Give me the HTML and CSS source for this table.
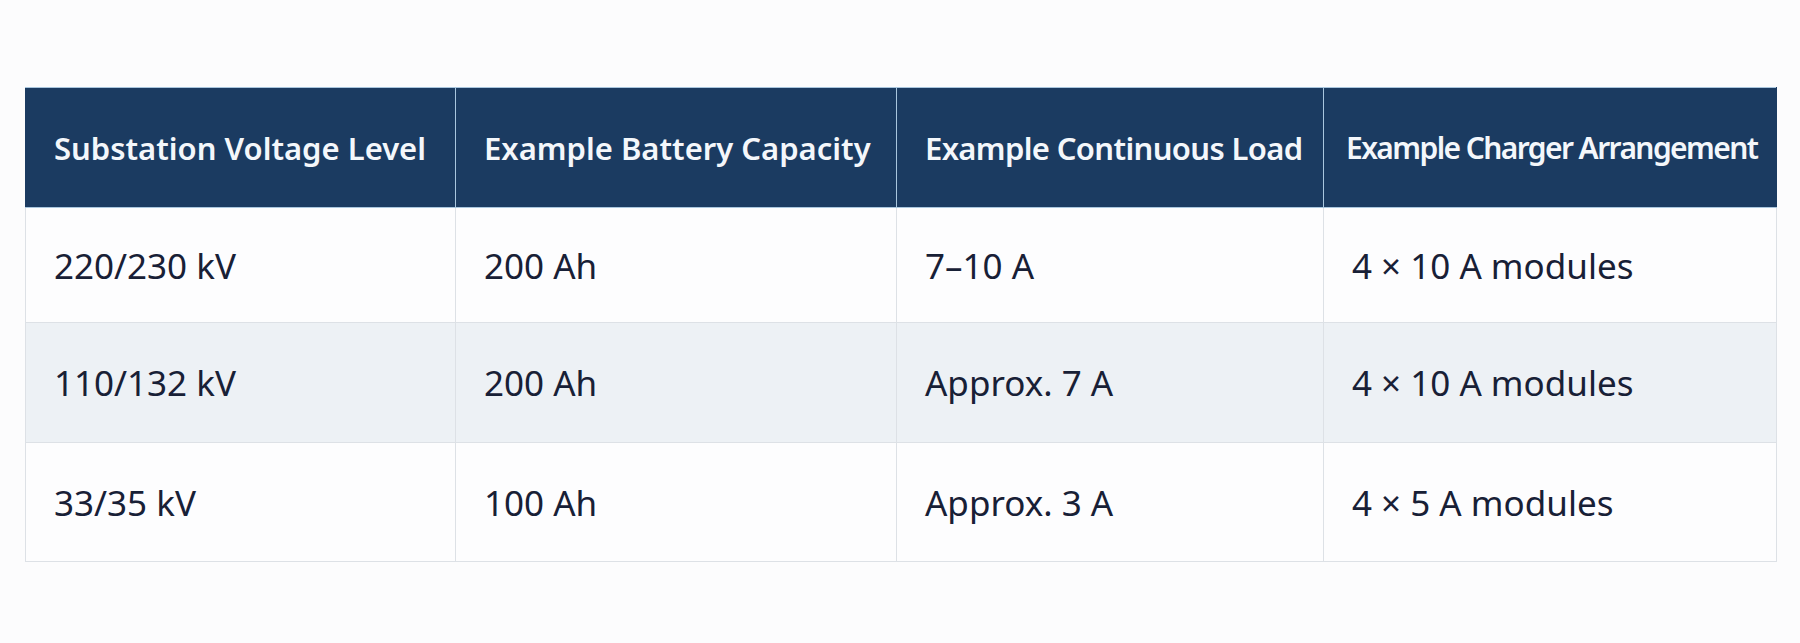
FILE: index.html
```html
<!DOCTYPE html>
<html lang="en">
<head>
<meta charset="utf-8">
<title>Battery sizing examples</title>
<link rel="stylesheet" href="styles.css">
</head>
<body>
<main class="page">
  <table class="spec">
    <colgroup>
      <col class="c1"><col class="c2"><col class="c3"><col class="c4">
    </colgroup>
    <thead>
      <tr>
        <th>Substation Voltage Level</th>
        <th>Example Battery Capacity</th>
        <th class="tight">Example Continuous Load</th>
        <th class="tighter">Example Charger Arrangement</th>
      </tr>
    </thead>
    <tbody>
      <tr class="r1">
        <td>220/230 kV</td>
        <td>200 Ah</td>
        <td>7–10 A</td>
        <td>4 × 10 A modules</td>
      </tr>
      <tr class="r2 alt">
        <td>110/132 kV</td>
        <td>200 Ah</td>
        <td>Approx. 7 A</td>
        <td>4 × 10 A modules</td>
      </tr>
      <tr class="r3">
        <td>33/35 kV</td>
        <td>100 Ah</td>
        <td>Approx. 3 A</td>
        <td>4 × 5 A modules</td>
      </tr>
    </tbody>
  </table>
</main>
</body>
</html>
```

FILE: styles.css
```css
html, body {
  margin: 0;
  padding: 0;
  background: #fcfcfd;
}
.page {
  padding: 87px 24px 0 25px;
  font-family: "Noto Sans", "Open Sans", sans-serif;
}
.spec {
  border-collapse: collapse;
  table-layout: fixed;
  width: 1751px;
  background: #fdfdfe;
}
.c1 { width: 430px; }
.c2 { width: 441px; }
.c3 { width: 427px; }
.c4 { width: 453px; }
.spec th {
  height: 120px;
  box-sizing: border-box;
  background: #1b3b61;
  color: #f4f7fb;
  font-size: 31px;
  font-weight: 600;
  text-align: left;
  padding: 0 6px 0 28px;
  border-left: 1.5px solid #a9c6de;
  border-top: 1px solid #a9c6de;
  border-bottom: 1px solid #a9c6de;
  white-space: nowrap;
  overflow: hidden;
}
.spec th.tight { letter-spacing: -0.65px; }
.spec th.tighter { letter-spacing: -1.6px; font-size: 30px; padding-left: 22px; }
.spec th:first-child { border-left: 1px solid #1b3b61; }
.spec th:last-child { border-right: 1px solid #1b3b61; }
.spec td {
  box-sizing: border-box;
  padding: 0 10px 0 28px;
  font-size: 35px;
  color: #182036;
  border: 1.5px solid #dde1e6;
  white-space: nowrap;
}
.r1 td { height: 115px; }
.r2 td { height: 120px; }
.r3 td { height: 119px; }
.alt td { background: #edf1f5; }
```
